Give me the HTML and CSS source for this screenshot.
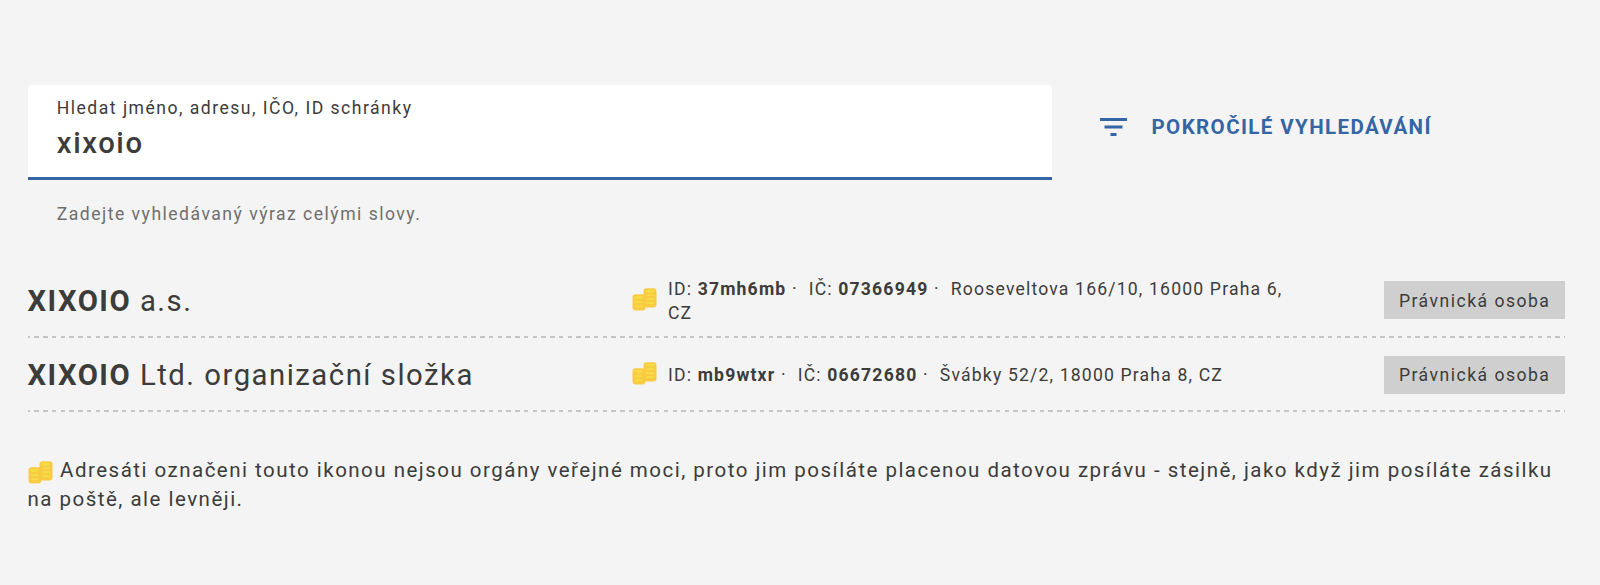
FILE: index.html
```
<!DOCTYPE html>
<html lang="cs">
<head>
    <meta charset="UTF-8">
    <meta name="viewport" content="width=device-width, initial-scale=1.0">
    <title>Vyhledávání datových schránek</title>
    <link rel="stylesheet" href="styles.css">
</head>
<body>
    <svg class="sprite" aria-hidden="true">
        <symbol id="coins" viewBox="0 0 25 23">
            <rect x="11.5" y="0.3" width="13" height="19.2" rx="3.2" fill="#f9cb43"/>
            <rect x="0.5" y="6.2" width="13" height="16.3" rx="3.2" fill="#f9cb43"/>
            <g fill="#f5de45">
                <ellipse cx="18" cy="3" rx="4.3" ry="1.5"/>
                <rect x="14" y="6.4" width="8" height="1.7" rx="0.8"/>
                <rect x="14" y="10.3" width="8" height="1.7" rx="0.8"/>
                <rect x="14" y="14.2" width="8" height="1.7" rx="0.8"/>
                <ellipse cx="6.5" cy="9.2" rx="4.1" ry="1.5"/>
                <rect x="3" y="13.2" width="7.4" height="1.7" rx="0.8"/>
                <rect x="3" y="17.6" width="7.4" height="1.7" rx="0.8"/>
            </g>
        </symbol>
    </svg>

    <div class="container">
        <div class="search">
            <div class="field">
                <label class="field-box">
                    <span class="field-label">Hledat jméno, adresu, IČO, ID schránky</span>
                    <input class="field-input" type="text" value="xixoio">
                </label>
                <div class="field-hint">Zadejte vyhledávaný výraz celými slovy.</div>
            </div>
            <a class="advanced">
                <svg class="filter-icon" viewBox="0 0 27 18" fill="#3465a4">
                    <rect x="0" y="0" width="27" height="3"/>
                    <rect x="4.5" y="7.5" width="18" height="3"/>
                    <rect x="10.5" y="15" width="6" height="3"/>
                </svg>
                <span>POKROČILÉ VYHLEDÁVÁNÍ</span>
            </a>
        </div>

        <div class="results">
            <div class="result">
                <div class="result-name"><strong>XIXOIO</strong> a.s.</div>
                <svg class="coins"><use href="#coins"/></svg>
                <div class="result-info">ID: <strong>37mh6mb</strong> ·&nbsp; IČ: <strong>07366949</strong> ·&nbsp; Rooseveltova 166/10, 16000 Praha 6, CZ</div>
                <div class="badge">Právnická osoba</div>
            </div>
            <div class="result">
                <div class="result-name"><strong>XIXOIO</strong> Ltd. organizační složka</div>
                <svg class="coins"><use href="#coins"/></svg>
                <div class="result-info">ID: <strong>mb9wtxr</strong> ·&nbsp; IČ: <strong>06672680</strong> ·&nbsp; Švábky 52/2, 18000 Praha 8, CZ</div>
                <div class="badge">Právnická osoba</div>
            </div>
        </div>

        <p class="note"><svg class="coins"><use href="#coins"/></svg> Adresáti označeni touto ikonou nejsou orgány veřejné moci, proto jim posíláte placenou datovou zprávu - stejně, jako když jim posíláte zásilku na poště, ale levněji.</p>
    </div>
</body>
</html>
```
FILE: styles.css
```
* {
    box-sizing: border-box;
}
body {
    margin: 0;
    background-color: #f4f4f4;
    color: #3c3c3b;
    font-family: Roboto, sans-serif;
    font-size: 20.5px;
    letter-spacing: 1.48px;
}
.sprite {
    display: none;
}
.container {
    padding: 85px 35px 0 27.5px;
}
.search {
    display: flex;
    align-items: flex-start;
}
.field {
    width: 1024.5px;
}
.field-box {
    display: block;
    height: 95px;
    padding: 10px 29.3px 0;
    background: #fff;
    border-bottom: 3px solid #3465a4;
    border-radius: 4px 4px 0 0;
}
.field-label {
    display: block;
    font-size: 17.58px;
    line-height: 26px;
}
.field-input {
    display: block;
    width: 100%;
    height: 36px;
    margin-top: 4px;
    padding: 0;
    border: 0;
    outline: 0;
    background: none;
    color: inherit;
    font-family: inherit;
    font-size: 29.3px;
    font-weight: 500;
    letter-spacing: 1.6px;
}
.field-hint {
    padding: 21px 29.3px 0;
    font-size: 17.58px;
    line-height: 26px;
    color: #6f6f6e;
}
.advanced {
    display: flex;
    align-items: center;
    gap: 24.5px;
    height: 36px;
    margin: 24px 0 0 48px;
    color: #3465a4;
    font-weight: 700;
    letter-spacing: 1.4px;
}
.filter-icon {
    width: 27px;
    height: 18px;
}
.results {
    margin-top: 36px;
}
.result {
    display: grid;
    grid-template-columns: 604.5px 36px 625px 1fr;
    align-items: center;
    height: 74.5px;
    background: repeating-linear-gradient(90deg, #c6c6c6 0 2.2px, transparent 2.2px 6.5px, #c6c6c6 6.5px 8.74px) left bottom / 100% 2px no-repeat;
}
.result-name {
    padding-top: 1px;
    font-size: 29.3px;
    line-height: 36px;
    letter-spacing: 1.5px;
}
.result-info {
    padding-top: 1px;
    font-size: 17.58px;
    line-height: 24px;
    letter-spacing: 1.18px;
}
.coins {
    width: 25px;
    height: 23px;
}
.result .coins {
    margin-bottom: 2px;
}
.badge {
    justify-self: end;
    padding: 6.5px 14.65px 5.5px;
    background: #cfcfcf;
    font-size: 17.58px;
    line-height: 26px;
}
.note {
    margin: 44px 0 0;
    line-height: 29.3px;
    letter-spacing: 1.488px;
}
.note .coins {
    margin: 0 0.3px 0 0.7px;
    vertical-align: -7px;
}
```
